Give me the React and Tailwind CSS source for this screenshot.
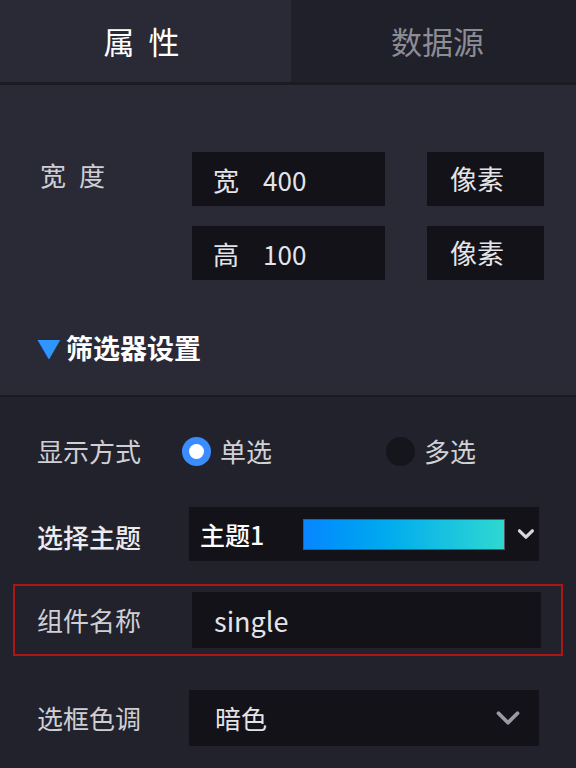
import { ChevronDown } from "lucide-react";

const font = { fontFamily: '"Noto Sans CJK SC", "Liberation Sans", sans-serif' };

const Radio = ({ checked, label }) => (
  <div className="flex items-center">
    {checked ? (
      <span className="w-[29px] h-[29px] rounded-full bg-[#3a8cff] flex items-center justify-center">
        <span className="w-[15px] h-[15px] rounded-full bg-white" />
      </span>
    ) : (
      <span className="w-[29px] h-[29px] rounded-full bg-[#15151c]" />
    )}
    <span className="ml-[9px] text-[26px] leading-none text-[#d2d2d6]">{label}</span>
  </div>
);

const App = () => {
  return (
    <div className="w-[576px] h-[768px] bg-[#22222d] overflow-hidden" style={font}>
      {/* Tabs */}
      <div className="flex h-[85px] border-b-[3px] border-[#1b1b23]">
        <div className="w-[291px] bg-[#2a2a36] flex items-center justify-center text-[31px] text-white tracking-[14px] pl-[6px]">
          属性
        </div>
        <div className="flex-1 bg-[#20202a] flex items-center justify-center text-[31px] text-[#8c8c94] pl-[8px]">
          数据源
        </div>
      </div>

      {/* Size section */}
      <div className="bg-[#2a2a36] h-[312px] pt-[67px] border-b-[2px] border-[#1b1b23]">
        <div className="flex">
          <div className="w-[192px] pl-[40px] pt-[3px] text-[26px] text-[#cfcfd4] tracking-[13px]">宽度</div>
          <div className="flex flex-col gap-[20px]">
            {[
              ["宽", "400"],
              ["高", "100"],
            ].map(([k, v]) => (
              <div key={k} className="flex gap-[42px]">
                <div className="w-[193px] h-[54px] bg-[#121218] flex items-center pl-[21px] text-[26px] text-[#e4e4e8]">
                  <span>{k}</span>
                  <span className="ml-[24px]">{v}</span>
                </div>
                <div className="w-[117px] h-[54px] bg-[#121218] flex items-center pl-[23px] text-[27px] text-[#e4e4e8]">
                  像素
                </div>
              </div>
            ))}
          </div>
        </div>
        <div className="flex items-center pl-[37px] mt-[48px]">
          <span className="text-[#2f95ff] text-[24px] leading-none">▼</span>
          <span className="ml-[5px] text-[27px] font-bold text-white">筛选器设置</span>
        </div>
      </div>

      {/* Filter settings */}
      <div className="pt-[39px]">
        <div className="flex items-center h-[30px] pl-[37px]">
          <span className="w-[145px] text-[26px] leading-none text-[#cfcfd4]">显示方式</span>
          <div className="w-[204px]">
            <Radio checked label="单选" />
          </div>
          <Radio label="多选" />
        </div>

        <div className="flex items-center h-[54px] mt-[41px] pl-[37px]">
          <span className="w-[152px] text-[26px] leading-none text-[#ececf0] font-medium pt-[6px]">选择主题</span>
          <div className="w-[350px] h-[54px] bg-[#121218] flex items-center pl-[11px]">
            <span className="text-[25px] leading-none text-white font-medium w-[104px]">主题1</span>
            <div className="w-[203px] h-[31px] border border-[#55555c] bg-gradient-to-r from-[#0a86ff] to-[#2ed8d0]" />
            <ChevronDown className="ml-[8px] w-[26px] h-[26px] text-[#d8d8dc]" strokeWidth={3} />
          </div>
        </div>

        <div className="mx-[13px] mt-[23px] h-[72px] border-[2px] border-[#b01515] flex items-center">
          <span className="w-[177px] pl-[22px] text-[26px] leading-none text-[#cfcfd4]">组件名称</span>
          <div className="w-[349px] h-[56px] bg-[#121218] flex items-center pl-[22px] text-[27px] leading-none text-[#e4e4e8]">
            single
          </div>
        </div>

        <div className="flex items-center h-[56px] mt-[34px] pl-[37px]">
          <span className="w-[152px] text-[26px] leading-none text-[#cfcfd4]">选框色调</span>
          <div className="w-[350px] h-[56px] bg-[#121218] flex items-center justify-between pl-[26px] pr-[12px]">
            <span className="text-[26px] leading-none text-[#e4e4e8]">暗色</span>
            <ChevronDown className="w-[38px] h-[38px] text-[#9a9aa2]" strokeWidth={2.4} />
          </div>
        </div>
      </div>
    </div>
  );
};

export default App;
